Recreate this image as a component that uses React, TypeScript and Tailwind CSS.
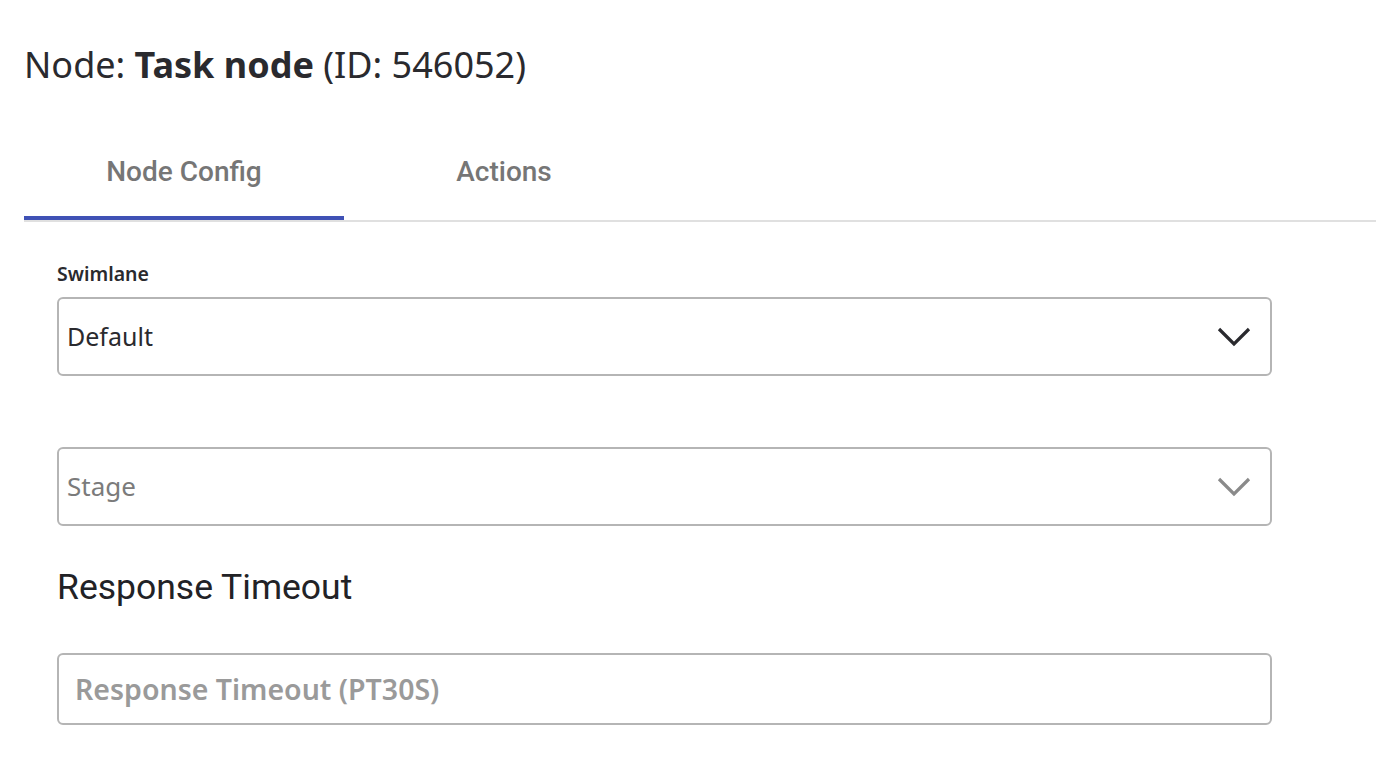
const sans = "font-['Noto_Sans','Open_Sans',sans-serif]";
const roboto = "font-['Roboto',sans-serif]";

function Tab({ label, active }: { label: string; active?: boolean }) {
  return (
    <div className="relative flex h-[98px] w-[320px] items-center justify-center pt-[2px]">
      <span className={`${roboto} text-[28px] font-medium text-[#767676]`}>{label}</span>
      {active && <div className="absolute bottom-0 left-0 h-[4px] w-full bg-[#3f51b5]" />}
    </div>
  );
}

function Chevron({ color }: { color: string }) {
  return (
    <svg width="36" height="22" viewBox="0 0 36 22" fill="none" className={color}>
      <polyline points="3,3 18,18 33,3" stroke="currentColor" strokeWidth="3.2" />
    </svg>
  );
}

function SelectBox({ value, placeholder }: { value?: string; placeholder?: string }) {
  return (
    <div className="flex h-[79px] w-[1215px] items-center justify-between rounded-[6px] border-2 border-[#b5b5b5] pl-[8px] pr-[18px]">
      <span className={`${sans} ${value ? "text-[25px] text-[#2a2a2e]" : "text-[26px] text-[#7b7b7b]"}`}>
        {value ?? placeholder}
      </span>
      <Chevron color={value ? "text-[#2a2a2e]" : "text-[#8a8a8a]"} />
    </div>
  );
}

export default function App() {
  return (
    <div className="min-h-screen bg-white pl-[24px] pt-[40px]">
      <h1 className={`${sans} text-[36px] leading-[50px] text-[#2a2a2e]`}>
        Node: <span className="font-bold">Task node</span> (ID: 546052)
      </h1>

      <div className="mt-[32px] flex border-b-2 border-[#e0e0e0]">
        <Tab label="Node Config" active />
        <Tab label="Actions" />
      </div>

      <div className="pl-[33px] pt-[40px]">
        <label className={`${sans} block text-[19.5px] font-semibold leading-[24px] text-[#2a2a2e]`}>
          Swimlane
        </label>
        <div className="mt-[11px]">
          <SelectBox value="Default" />
        </div>

        <div className="mt-[71px]">
          <SelectBox placeholder="Stage" />
        </div>

        <h2 className={`${roboto} mt-[40px] text-[35.5px] leading-[42px] text-[#222226]`}>
          Response Timeout
        </h2>

        <div className="mt-[45px] flex h-[72px] w-[1215px] items-center rounded-[6px] border-2 border-[#b5b5b5] pl-[16px]">
          <span className={`${sans} text-[28.5px] font-semibold text-[#9a9a9a]`}>
            Response Timeout (PT30S)
          </span>
        </div>
      </div>
    </div>
  );
}
